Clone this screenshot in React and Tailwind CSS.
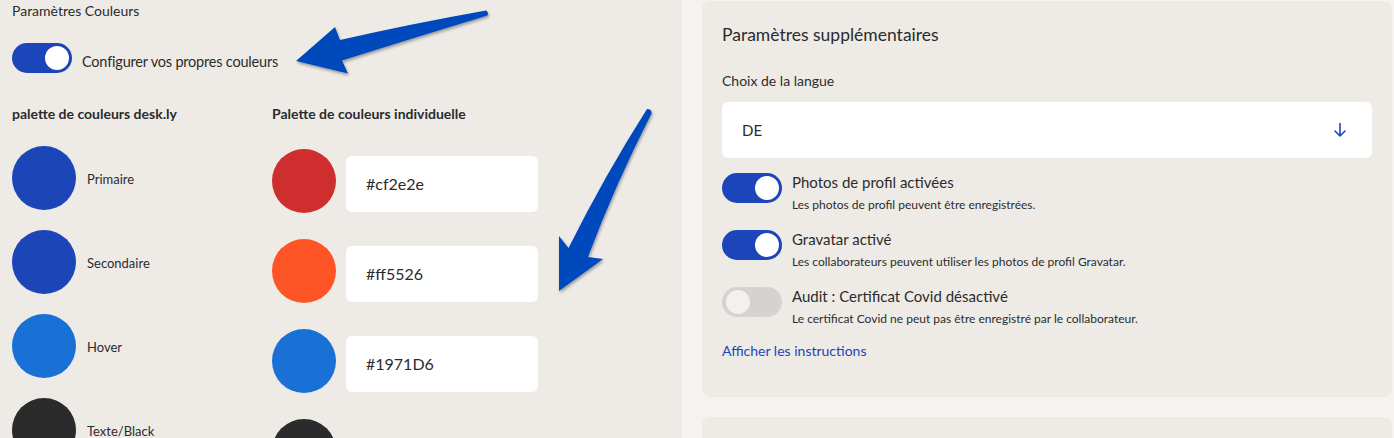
import React from "react";

const font = { fontFamily: "Lato, 'Open Sans', sans-serif" };

function Toggle({ on }) {
  return (
    <div
      className={
        "relative shrink-0 w-[60px] h-[30px] rounded-full " +
        (on ? "bg-[#1b45b8]" : "bg-[#d5d3d1]")
      }
    >
      <div
        className={
          "absolute top-[3px] w-[24px] h-[24px] rounded-full " +
          (on ? "right-[3px] bg-white" : "left-[4px] bg-[#f3f1ef]")
        }
      />
    </div>
  );
}

const deskly = [
  { c: "bg-[#1c45b8]", l: "Primaire" },
  { c: "bg-[#1c45b8]", l: "Secondaire" },
  { c: "bg-[#1971d6]", l: "Hover" },
  { c: "bg-[#2b2b2b]", l: "Texte/Black" },
];

const indiv = [
  { c: "bg-[#cf2e2e]", v: "#cf2e2e" },
  { c: "bg-[#ff5526]", v: "#ff5526" },
  { c: "bg-[#1971d6]", v: "#1971D6" },
  { c: "bg-[#2b2b2b]", v: "" },
];

const settings = [
  {
    on: true,
    t: "Photos de profil activées",
    d: "Les photos de profil peuvent être enregistrées.",
  },
  {
    on: true,
    t: "Gravatar activé",
    d: "Les collaborateurs peuvent utiliser les photos de profil Gravatar.",
  },
  {
    on: false,
    t: "Audit : Certificat Covid désactivé",
    d: "Le certificat Covid ne peut pas être enregistré par le collaborateur.",
  },
];

export default function App() {
  return (
    <div
      className="relative w-[1394px] h-[438px] overflow-hidden bg-[#f5f2ef] text-[#2b2b2b] flex"
      style={font}
    >
      {/* Left panel */}
      <div className="w-[682px] shrink-0 bg-[#eeebe7] px-3">
        <div className="text-[14px] leading-[22px]">Paramètres Couleurs</div>
        <div className="flex items-center gap-[10px] mt-[21px]">
          <Toggle on />
          <span className="text-[14.5px] tracking-[-0.2px] pt-[7px]">Configurer vos propres couleurs</span>
        </div>
        <div className="flex mt-[31px]">
          <div className="w-[260px] shrink-0">
            <div className="text-[14px] font-bold leading-[20px]">
              palette de couleurs desk.ly
            </div>
            <div className="flex flex-col gap-[20px] mt-[22px]">
              {deskly.map((r, i) => (
                <div key={i} className="flex items-center gap-[11px]">
                  <div className={"w-[64px] h-[64px] rounded-full " + r.c} />
                  <span className="text-[13px] pt-[4px]">{r.l}</span>
                </div>
              ))}
            </div>
          </div>
          <div>
            <div className="text-[14px] font-bold leading-[20px]">
              Palette de couleurs individuelle
            </div>
            <div className="flex flex-col gap-[26px] mt-[25px]">
              {indiv.map((r, i) => (
                <div key={i} className="flex items-start gap-[10px]">
                  <div className={"w-[64px] h-[64px] rounded-full shrink-0 " + r.c} />
                  {r.v && (
                    <div className="mt-[7px] w-[192px] h-[56px] bg-white rounded-[6px] flex items-center px-5 text-[16px]">
                      {r.v}
                    </div>
                  )}
                </div>
              ))}
            </div>
          </div>
        </div>
      </div>

      {/* Right column */}
      <div className="ml-[20px] w-[690px] shrink-0 flex flex-col gap-[20px] pt-px">
        <div className="h-[396px] shrink-0 bg-[#eeebe7] rounded-[8px] px-5 pt-[21px]">
          <div className="text-[17.5px] leading-[26px]">Paramètres supplémentaires</div>
          <div className="text-[14px] leading-[20px] mt-[23px]">Choix de la langue</div>
          <div className="mt-[11px] h-[56px] bg-white rounded-[6px] flex items-center justify-between pl-5 pr-[25px]">
            <span className="text-[15px]">DE</span>
            <svg width="14" height="16" viewBox="0 0 14 16" fill="none" stroke="#1b45b8" strokeWidth="1.6" strokeLinecap="round" strokeLinejoin="round">
              <path d="M7 1.5v12.5M2 9l5 5 5-5" />
            </svg>
          </div>
          <div className="flex flex-col gap-[15px] mt-[15px]">
            {settings.map((s, i) => (
              <div key={i} className="flex items-start gap-[10px]">
                <Toggle on={s.on} />
                <div className="-mt-[2px]">
                  <div className="text-[15px] leading-[22px]">{s.t}</div>
                  <div className="text-[12px] leading-[20px] mt-[2px]">{s.d}</div>
                </div>
              </div>
            ))}
          </div>
          <div className="text-[14px] text-[#1b45b8] mt-[11px]">Afficher les instructions</div>
        </div>
        <div className="h-[60px] shrink-0 bg-[#eeebe7] rounded-[8px]" />
      </div>

      {/* Annotation arrows */}
      <svg
        className="absolute left-0 top-0 pointer-events-none"
        width="1394"
        height="438"
        viewBox="0 0 1394 438"
      >
        <defs>
          <filter id="sh" x="-20%" y="-20%" width="140%" height="140%">
            <feDropShadow dx="1" dy="2" stdDeviation="1.5" floodColor="#000" floodOpacity="0.35" />
          </filter>
        </defs>
        <g fill="#0048bd" filter="url(#sh)">
          <path d="M486 10.5 Q489 12.5 487.5 15.5 Q420 36 342 60.5 L348 73.5 L296 61 L335 27 L340 40 Q410 24 486 10.5 Z" />
          <path d="M647 109 Q652 109 651.5 113.5 Q615 185 588 257 L603 259 L559 291 L559 236 L568.5 248 Q605 175 647 109 Z" />
        </g>
      </svg>
    </div>
  );
}
